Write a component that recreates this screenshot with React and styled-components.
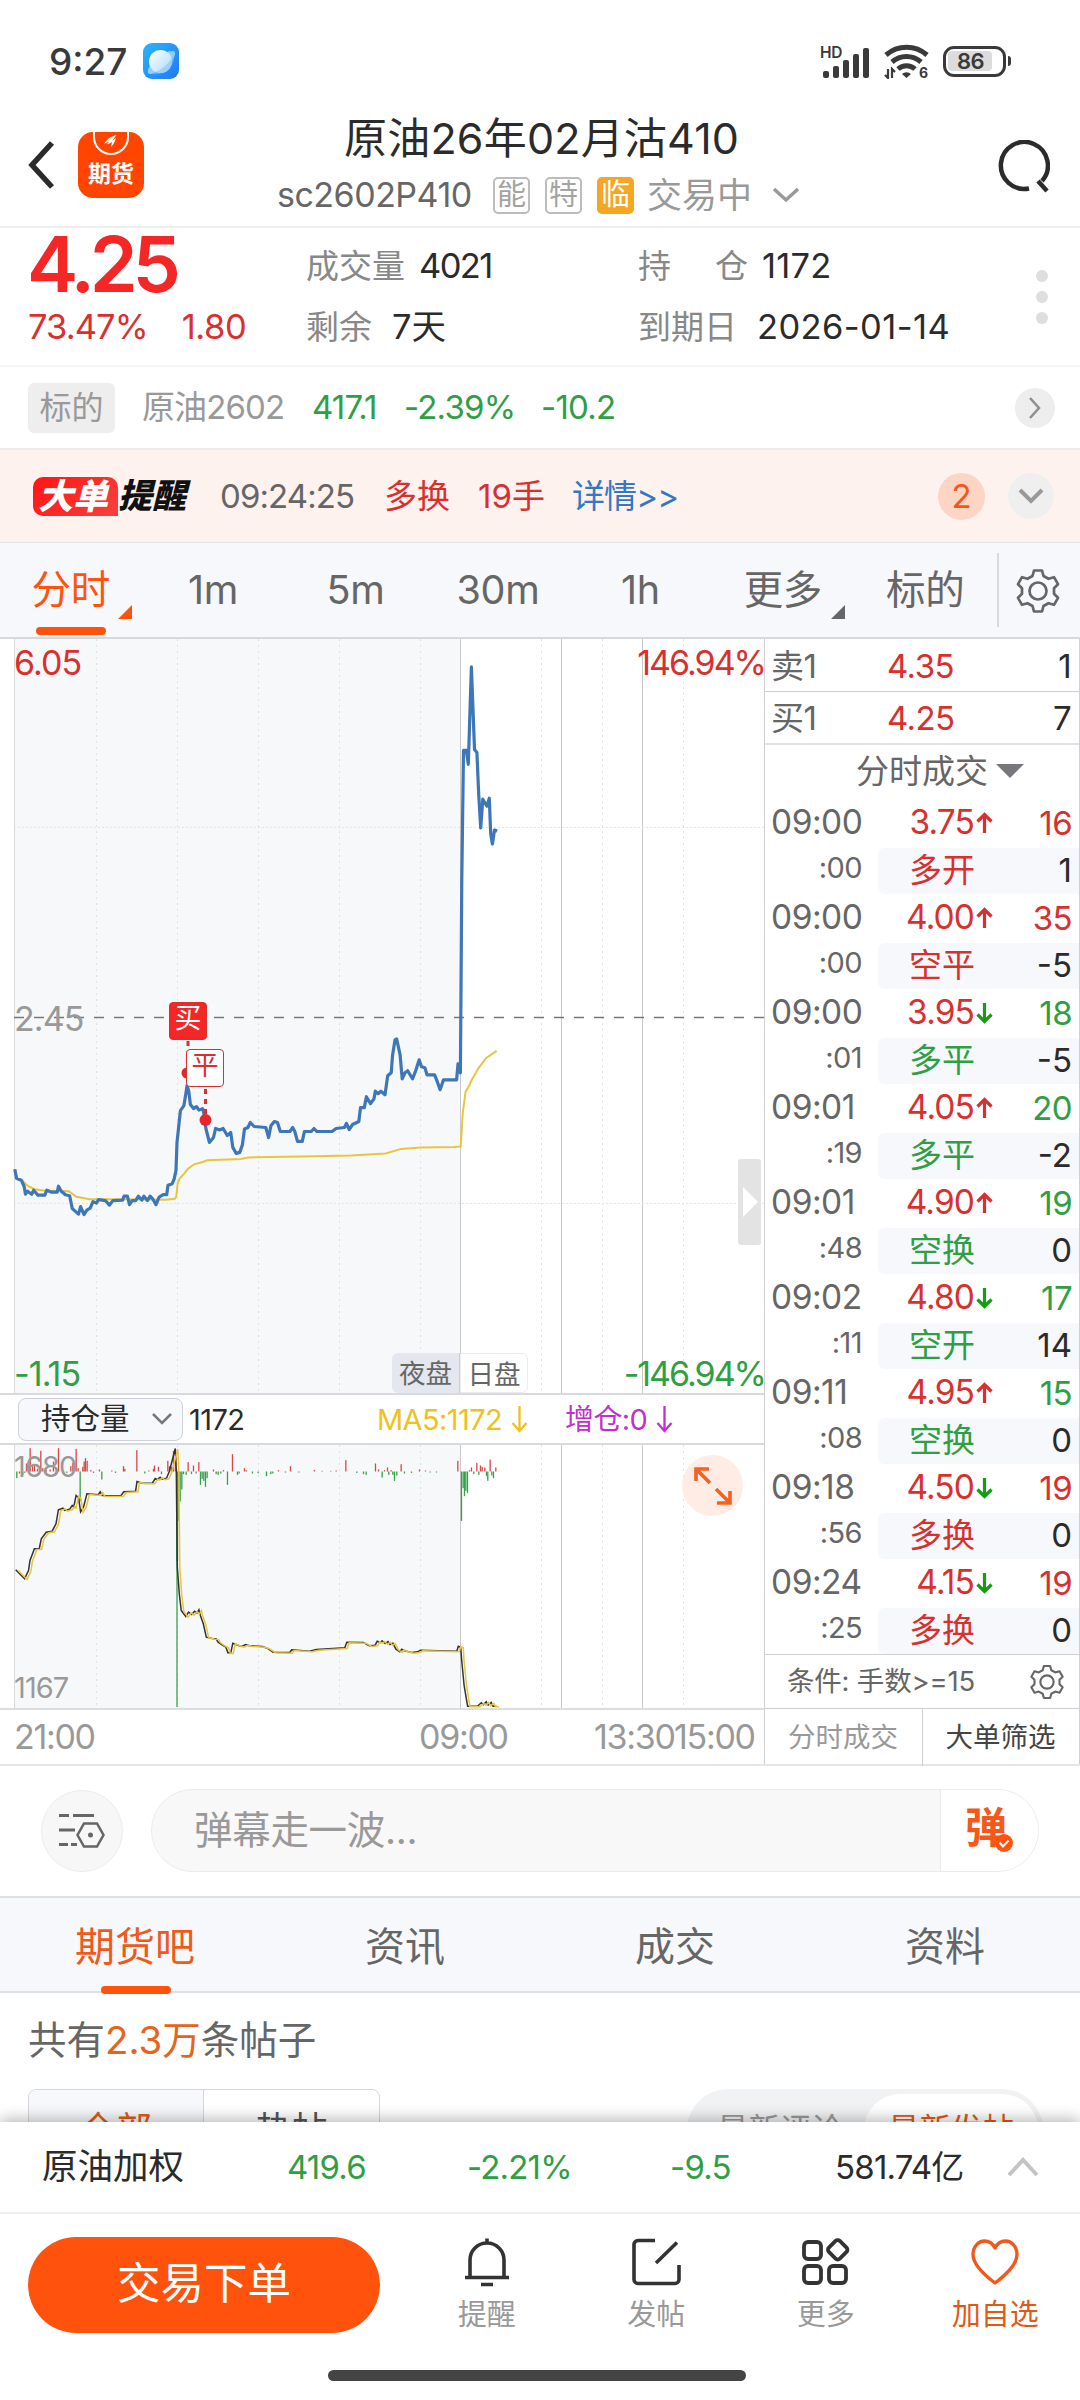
import styled, { createGlobalStyle, css } from "styled-components";

const RED = "#d8302f";
const GREEN = "#2f9e44";
const ORANGE = "#ff530d";
const DARK = "#2b2b2b";
const GREY = "#666";
const LIGHT = "#999";

const BLUE_LINE = "#3d77b8";
const YELLOW_LINE = "#e9c53c";

const periods = [
  { label: "分时", active: true, corner: true },
  { label: "1m" },
  { label: "5m" },
  { label: "30m" },
  { label: "1h" },
  { label: "更多", corner: true },
  { label: "标的" },
];

const trades = [
  { time: "09:00", sec: ":00", price: "3.75", up: true, qty: 16, kind: "多开", diff: "1", buy: true },
  { time: "09:00", sec: ":00", price: "4.00", up: true, qty: 35, kind: "空平", diff: "-5", buy: true },
  { time: "09:00", sec: ":01", price: "3.95", up: false, qty: 18, kind: "多平", diff: "-5", buy: false },
  { time: "09:01", sec: ":19", price: "4.05", up: true, qty: 20, kind: "多平", diff: "-2", buy: false },
  { time: "09:01", sec: ":48", price: "4.90", up: true, qty: 19, kind: "空换", diff: "0", buy: false },
  { time: "09:02", sec: ":11", price: "4.80", up: false, qty: 17, kind: "空开", diff: "14", buy: false },
  { time: "09:11", sec: ":08", price: "4.95", up: true, qty: 15, kind: "空换", diff: "0", buy: false },
  { time: "09:18", sec: ":56", price: "4.50", up: false, qty: 19, kind: "多换", diff: "0", buy: true },
  { time: "09:24", sec: ":25", price: "4.15", up: false, qty: 19, kind: "多换", diff: "0", buy: true },
];

// grid lines shared by both charts
const dottedX = [96.5, 177.5, 258.5, 339.5, 420.5, 541.5, 602.5, 683.5];
const solidX = [460.5, 561.5, 642.5];

const price = [
  [43,1084],[48,1102],[62,1106],[70,1118],[74,1134],[80,1128],[92,1134],[98,1126],[110,1136],[130,1136],[136,1126],[150,1130],[166,1130],[170,1118],[178,1128],[190,1135],[202,1137],[210,1163],[218,1168],[228,1174],[234,1159],[244,1175],[252,1166],[262,1162],[270,1149],[280,1152],[286,1145],[306,1147],[318,1156],[328,1147],[356,1146],[360,1138],[370,1138],[376,1155],[384,1147],[394,1147],[402,1138],[412,1146],[418,1138],[428,1147],[436,1138],[444,1144],[453,1155],[462,1140],[474,1135],[484,1135],[488,1116],[500,1113],[506,1103],[511,1086],[514,1030],[524,966],[534,956],[540,930],[543,916],[548,926],[553,954],[562,962],[570,958],[578,965],[588,962],[594,976],[598,1002],[608,1030],[620,1020],[626,1002],[638,1005],[648,1002],[660,1016],[670,1010],[676,1040],[686,1052],[696,1050],[704,1035],[710,1003],[720,1000],[727,990],[738,998],[772,1000],[780,1020],[787,996],[797,988],[806,990],[814,1008],[842,1008],[850,1000],[856,1008],[864,1028],[878,1028],[884,1008],[904,1008],[912,1002],[920,1008],[964,1008],[976,1002],[1000,1000],[1006,992],[1014,1004],[1024,994],[1042,988],[1047,960],[1058,960],[1064,938],[1076,952],[1086,942],[1090,927],[1098,932],[1106,927],[1118,934],[1126,896],[1136,890],[1140,854],[1147,824],[1152,822],[1162,854],[1168,902],[1176,890],[1184,886],[1198,902],[1208,884],[1217,864],[1224,878],[1234,880],[1240,894],[1262,894],[1270,908],[1278,924],[1288,904],[1326,904],[1330,872],[1337,890],[1341,500],[1346,242],[1354,242],[1360,270],[1369,74],[1378,240],[1385,246],[1390,330],[1396,398],[1402,340],[1414,354],[1421,338],[1425,410],[1430,430],[1436,402],[1444,404],
];
const average = [
  [43,1086],[52,1104],[64,1106],[80,1117],[100,1124],[130,1127],[200,1128],[222,1139],[260,1144],[370,1144],[480,1145],[508,1143],[512,1138],[516,1112],[522,1102],[534,1093],[546,1083],[564,1074],[586,1070],[602,1066],[700,1063],[720,1060],[880,1058],[1020,1056],[1120,1052],[1165,1043],[1220,1040],[1320,1039],[1338,1038],[1344,970],[1352,928],[1364,914],[1370,904],[1390,880],[1412,860],[1442,846],
];
const interest = [
  [32,568],[40,580],[50,595],[58,570],[61,540],[70,505],[80,504],[84,475],[94,455],[106,452],[114,430],[119,388],[128,383],[132,390],[142,386],[147,375],[150,380],[155,345],[160,352],[164,394],[170,380],[177,340],[200,343],[204,334],[208,345],[246,346],[252,334],[276,332],[279,303],[290,308],[310,308],[316,294],[320,297],[326,290],[330,296],[339,293],[345,272],[357,204],[359,270],[361,560],[365,640],[369,690],[378,708],[384,695],[390,702],[396,692],[401,698],[405,688],[408,705],[414,730],[420,770],[432,774],[440,775],[444,785],[452,793],[460,800],[464,817],[470,817],[474,788],[486,795],[492,798],[500,792],[508,796],[534,798],[544,803],[556,815],[590,816],[594,808],[630,812],[644,807],[702,802],[706,785],[740,786],[752,796],[764,794],[768,782],[774,786],[778,781],[784,789],[790,783],[794,792],[800,788],[806,806],[814,814],[818,806],[824,811],[838,816],[850,814],[856,809],[930,812],[933,797],[938,800],[940,840],[945,915],[952,977],[972,977],[980,967],[984,973],[990,964],[994,974],[1000,966],[1004,977],[1011,977],
];
// [x, height] at 3 units per pixel, positive bars go up
const flow = [
  [50,-20],[58,-6],[68,-10],[74,-4],[79,24],[90,70],[97,16],[103,20],[112,8],[122,62],[128,10],[138,4],[150,6],[160,30],[168,-6],[175,70],[190,-6],[200,-4],[212,16],[218,26],[228,68],[234,10],[240,-90],[248,14],[252,30],[256,40],[261,32],[272,4],[280,-4],[298,6],[305,-24],[335,3],[346,-4],[370,16],[374,8],[410,64],[434,-6],[446,3],[460,8],[463,18],[475,14],[484,-8],[503,32],[508,16],[514,14],[520,62],[526,54],[530,-268],[532,-268],[536,-148],[540,-90],[545,-54],[550,-8],[558,-10],[564,28],[574,-8],[580,18],[588,-6],[596,28],[601,-40],[606,-22],[611,-28],[616,-46],[621,-20],[640,6],[648,-8],[654,-10],[662,-6],[670,4],[682,-40],[697,52],[712,-10],[717,-6],[733,10],[738,4],[757,-6],[774,-5],[799,-14],[812,-8],[818,-6],[835,4],[856,-3],[871,16],[896,-3],[943,5],[966,2],[992,2],[1008,3],[1037,34],[1070,-4],[1090,-8],[1098,-10],[1126,24],[1135,6],[1146,-18],[1153,4],[1162,12],[1166,-10],[1173,4],[1178,-10],[1183,-28],[1190,-12],[1203,22],[1213,-6],[1234,-4],[1258,6],[1276,3],[1290,-3],[1309,-3],[1373,32],[1384,-148],[1389,-50],[1393,-74],[1397,-58],[1402,-64],[1408,4],[1414,12],[1421,-8],[1430,26],[1436,-10],[1441,18],[1446,14],[1454,12],[1459,-14],[1463,-28],[1470,36],[1475,-12],[1480,-20],[1487,12],
];

const project = (pts, sx, sy, dy) =>
  pts.map(([x, y]) => `${(x / sx).toFixed(1)},${(y / sy + dy).toFixed(1)}`).join(" ");

export default function App() {
  return (
    <>
      <GlobalStyle />
      <Page>
        <StatusBar />
        <Header />
        <Quote />
        <Underlying />
        <BigOrderAlert />
        <PeriodBar />
        <Market>
          <Charts />
          <OrderPanel />
        </Market>
        <Danmaku />
        <SectionTabs />
        <Posts />
        <Dock />
      </Page>
    </>
  );
}

function StatusBar() {
  return (
    <Status>
      <Clock>9:27</Clock>
      <svg width="38" height="38" viewBox="0 0 38 38">
        <defs>
          <linearGradient id="sky" x1="0" y1="0" x2="1" y2="1">
            <stop offset="0" stopColor="#28b5ff" />
            <stop offset="1" stopColor="#2277f5" />
          </linearGradient>
          <linearGradient id="orb" x1="0" y1="0" x2="1" y2="1">
            <stop offset="0" stopColor="#fff" />
            <stop offset="1" stopColor="#a9daff" />
          </linearGradient>
        </defs>
        <rect x="1" y="1" width="36" height="36" rx="9" fill="url(#sky)" />
        <path d="M6 31c-1.500-4 4-12 11-17S31 8 33 10c1 4-4 12-11 16S8 34 6 31z" fill="#8fd0ff" />
        <circle cx="18.500" cy="19.500" r="11.500" fill="url(#orb)" />
        <path d="M6 30c3 2 10 0 16-5s9-11 10-14c1 5-1 12-5 16s-13 8-21 3z" fill="#7cc3fb" opacity=".55" />
      </svg>
      <Signals>
        <svg width="52" height="36" viewBox="0 0 52 36">
          <text x="0" y="15" fontSize="15.500" fontWeight="600" fill="#3a3a3a" letterSpacing="-.4">HD</text>
          <g fill="#3a3a3a">
            <rect x="3" y="28" width="6" height="7" rx="2" />
            <rect x="13" y="23" width="6" height="12" rx="2" />
            <rect x="23" y="17" width="6" height="18" rx="2" />
            <rect x="33" y="11" width="6" height="24" rx="2" />
            <rect x="43" y="5" width="6" height="30" rx="2" />
          </g>
        </svg>
        <svg width="50" height="36" viewBox="0 0 50 36">
          <g fill="none" stroke="#3a3a3a" strokeWidth="5">
            <path d="M3 12a31 31 0 0 1 41 0" />
            <path d="M9 19a22 22 0 0 1 29 0" />
            <path d="M15 26a12.500 12.500 0 0 1 17 0" />
          </g>
          <path d="M19 31l4.500 4 4.500-4a6.500 6.500 0 0 0-9 0z" fill="#3a3a3a" />
          <path d="M5 26v9l-3-3M9 35v-9l3 3" fill="none" stroke="#3a3a3a" strokeWidth="2.200" />
          <text x="36" y="35" fontSize="14" fontWeight="700" fill="#3a3a3a">6</text>
        </svg>
        <Battery><i>86</i></Battery>
      </Signals>
    </Status>
  );
}

function Header() {
  return (
    <Head>
      <svg width="30" height="50" viewBox="0 0 30 50">
        <path d="M25 3L5 25l20 22" fill="none" stroke="#2b2b2b" strokeWidth="5.500" />
      </svg>
      <AppIcon>
        <svg width="36" height="23" viewBox="0 0 36 23">
          <path d="M1 0v5a17 17 0 0 0 34 0V0" fill="none" stroke="#fff" strokeWidth="2" />
          <path d="M11 12c3-5 7-8 13-9-2 1-3 4-5 6l4-3c-1 4-3 7-5 9l1-5c-2 1-3 2-5 2l2-2c-2 0-3 1-5 2z" fill="#fff" />
        </svg>
        期货
      </AppIcon>
      <Titles>
        <Title>原油26年02月沽410</Title>
        <SubTitle>
          <Code>sc2602P410</Code>
          <Tag>能</Tag>
          <Tag>特</Tag>
          <Tag $solid>临</Tag>
          <State>交易中</State>
          <svg width="28" height="16" viewBox="0 0 28 16">
            <path d="M2 2l12 11L26 2" fill="none" stroke="#999" strokeWidth="3.500" />
          </svg>
        </SubTitle>
      </Titles>
      <svg width="52" height="54" viewBox="0 0 52 54">
        <path d="M31 48.500A23.500 23.500 0 1 1 44 41M40 41l9 10" fill="none" stroke="#2b2b2b" strokeWidth="4.500" />
      </svg>
    </Head>
  );
}

function Quote() {
  return (
    <QuoteBox>
      <Last>
        <b>4.25</b>
        <div><Num $ls={-0.9}>73.47%</Num><Num $ls={-0.4}>1.80</Num></div>
      </Last>
      <Facts>
        <p>成交量<Num $ls={-1.6}>4021</Num></p>
        <p>剩余<Num $gap={19}>7天</Num></p>
      </Facts>
      <Facts>
        <p>持<Gap />仓<Num $ls={0.2}>1172</Num></p>
        <p>到期日<Num $gap={20} $ls={0.4}>2026-01-14</Num></p>
      </Facts>
      <Dots><i /><i /><i /></Dots>
    </QuoteBox>
  );
}

function Underlying() {
  return (
    <UnderRow>
      <GreyTag>标的</GreyTag>
      <UnderName>原油2602</UnderName>
      <UnderNum $w={92}>417.1</UnderNum>
      <UnderNum $w={137}>-2.39%</UnderNum>
      <UnderNum $w={90}>-10.2</UnderNum>
      <Round $size={40} $bg="#ededed">
        <svg width="12" height="22" viewBox="0 0 12 22">
          <path d="M1 1l9 10-9 10" fill="none" stroke="#8e8e8e" strokeWidth="2.500" />
        </svg>
      </Round>
    </UnderRow>
  );
}

function BigOrderAlert() {
  return (
    <Alert>
      <Brand><BrandRed>大单</BrandRed><BrandBlack>提醒</BrandBlack></Brand>
      <AlertText $w={164} $c={GREY} $ls={-0.9}>09:24:25</AlertText>
      <AlertText $w={94} $c={RED}>多换</AlertText>
      <AlertText $w={94} $c={RED}>19手</AlertText>
      <AlertText $w={120} $c="#3478c5" $ls={-0.9}>详情&gt;&gt;</AlertText>
      <Round $size={47} $bg="#fdd5c4">2</Round>
      <Round $size={46} $bg="#efefef">
        <svg width="26" height="16" viewBox="0 0 26 16">
          <path d="M2 2l11 11L24 2" fill="none" stroke="#999" strokeWidth="4" />
        </svg>
      </Round>
    </Alert>
  );
}

function PeriodBar() {
  return (
    <Periods>
      <PeriodList>
        {periods.map(({ label, active, corner }) => (
          <Period key={label} $active={active}>
            {label}
            {corner && <Corner $active={active} />}
          </Period>
        ))}
      </PeriodList>
      <PeriodGear><Gear size={46} /></PeriodGear>
    </Periods>
  );
}

function Gear({ size }) {
  return (
    <svg width={size} height={size} viewBox="0 0 46 46" fill="none" stroke="#666" strokeWidth="2.700" strokeLinejoin="round">
      <path d="M19 2.500h8l1.500 5.500 5 2.800 5.500-1.600 4 7-4 4v5.600l4 4-4 7-5.500-1.600-5 2.800L27 43.500h-8L17.500 38l-5-2.800L7 36.800l-4-7 4-4v-5.600l-4-4 4-7 5.500 1.600 5-2.800z" />
      <circle cx="23" cy="23" r="8.500" />
    </svg>
  );
}

function GridLines({ height }) {
  return (
    <g>
      <rect x="14" y="0" width="446" height={height} fill="#f7f8fa" />
      <path d={`M14.500 0V${height}`} stroke="#d9dade" />
      {dottedX.map((x) => (
        <path key={x} d={`M${x} 0V${height}`} stroke="#e1e2e5" strokeDasharray="2 4" />
      ))}
      {solidX.map((x) => (
        <path key={x} d={`M${x} 0V${height}`} stroke="#c8c9cc" />
      ))}
    </g>
  );
}

function Charts() {
  return (
    <ChartColumn>
      <Plot $h={754}>
        <svg width="764" height="754">
          <GridLines height={754} />
          <path d="M14 188.500H764M14 564.500H764" stroke="#e4e5e8" strokeDasharray="2 2" />
          <path d="M14 378.500H764" stroke="#777" strokeWidth="1.500" strokeDasharray="10 10" />
          <polyline points={project(average, 2.904, 2.01, -9)} fill="none" stroke={YELLOW_LINE} strokeWidth="2" />
          <polyline points={project(price, 2.904, 2.01, -9)} fill="none" stroke={BLUE_LINE} strokeWidth="3.200" strokeLinejoin="round" />
          <path d="M188 402V436M205.500 450V478" stroke={RED} strokeWidth="3" strokeDasharray="5 5" />
          <circle cx="187" cy="434" r="5.500" fill="#e5262a" />
          <circle cx="205.500" cy="481" r="6" fill="#e5262a" />
        </svg>
        <AxisLabel $x={14} $y={7} $c={RED}>6.05</AxisLabel>
        <AxisLabel $right $y={7} $c={RED}>146.94%</AxisLabel>
        <AxisLabel $x={14} $y={363} $c={LIGHT}>2.45</AxisLabel>
        <AxisLabel $x={14} $y={718} $c={GREEN}>-1.15</AxisLabel>
        <AxisLabel $right $y={718} $c={GREEN}>-146.94%</AxisLabel>
        <Marker $x={169} $y={363} $fill>买</Marker>
        <Marker $x={186} $y={410}>平</Marker>
        <Sessions><span>夜盘</span><span>日盘</span></Sessions>
        <Handle>
          <svg width="17" height="30" viewBox="0 0 17 30"><path d="M1 0l15 15L1 30z" fill="#fff" /></svg>
        </Handle>
      </Plot>
      <IndicatorRow>
        <Picker>
          持仓量
          <svg width="22" height="14" viewBox="0 0 22 14">
            <path d="M2 2l9 9 9-9" fill="none" stroke="#777" strokeWidth="2.500" />
          </svg>
        </Picker>
        <IndicatorText $w={188} $c={DARK}>1172</IndicatorText>
        <IndicatorText $w={188} $c="#edc21c">MA5:1172<Down /></IndicatorText>
        <IndicatorText $c="#c12fce">增仓:0<Down /></IndicatorText>
      </IndicatorRow>
      <Plot $h={263}>
        <svg width="764" height="263">
          <GridLines height={263} />
          {flow.map(([x, h]) => (
            <rect
              key={x}
              x={x / 3 - 0.5}
              y={h > 0 ? 26.5 - h / 3 : 26.5}
              width="1.300"
              height={Math.abs(h) / 3}
              fill={h > 0 ? "#dc4545" : "#35a249"}
            />
          ))}
          <path d="M177 27V262" stroke="#35a249" strokeWidth="1.300" />
          <polyline points={project(interest, 2.036, 3, -64.5)} fill="none" stroke="#333" strokeWidth="1.500" />
          <polyline points={project(interest.map(([x, y]) => [x + 5, y + 2]), 2.036, 3, -64.5)} fill="none" stroke={YELLOW_LINE} strokeWidth="1.500" />
        </svg>
        <AxisLabel $x={14} $y={7} $c={LIGHT} $s={29}>1680</AxisLabel>
        <AxisLabel $x={14} $y={228} $c={LIGHT} $s={29}>1167</AxisLabel>
        <Expand>
          <svg width="38" height="38" viewBox="0 0 38 38" fill="none" stroke="#f3621f" strokeWidth="3.600">
            <path d="M2 14V2h13M2 2l14 14M36 24v12H23M36 36L22 22" />
          </svg>
        </Expand>
      </Plot>
      <TimeAxis><i>21:00</i><i>09:00</i><i>13:30</i><i>15:00</i></TimeAxis>
    </ChartColumn>
  );
}

function Down() {
  return (
    <svg width="17" height="27" viewBox="0 0 17 27" fill="none" stroke="currentColor" strokeWidth="2.300">
      <path d="M8.500 0v25M1.500 17l7 8 7-8" />
    </svg>
  );
}

function OrderPanel() {
  return (
    <Panel>
      <Level><span>卖1</span><b>4.35</b><em>1</em></Level>
      <Level $last><span>买1</span><b>4.25</b><em>7</em></Level>
      <PanelTitle>
        分时成交
        <svg width="28" height="14" viewBox="0 0 28 14"><path d="M0 0h28L14 14z" fill="#77787c" /></svg>
      </PanelTitle>
      {trades.map((t, i) => (
        <Trade key={i} $c={t.buy ? RED : GREEN}>
          <time>{t.time}</time>
          <TradePrice>
            {t.price}
            <svg width="17" height="22" viewBox="0 0 17 22" fill="none" stroke={t.up ? RED : "#149c14"} strokeWidth="3.200">
              <path d={t.up ? "M8.500 21V3M1.500 9.500l7-7 7 7" : "M8.500 1v18M1.500 12.500l7 7 7-7"} />
            </svg>
          </TradePrice>
          <TradeQty>{t.qty}</TradeQty>
          <TradeSec>{t.sec}</TradeSec>
          <TradeKind><span>{t.kind}</span><em>{t.diff}</em></TradeKind>
        </Trade>
      ))}
      <Condition>条件: 手数&gt;=15 <Gear size={36} /></Condition>
      <PanelTabs><span>分时成交</span><span>大单筛选</span></PanelTabs>
    </Panel>
  );
}

function Danmaku() {
  return (
    <DanmakuRow>
      <DanmakuSet>
        <svg width="46" height="36" viewBox="0 0 46 36" fill="none" stroke="#666" strokeWidth="3">
          <path d="M0 2.500h10M14 2.500h21M0 17h16M0 31.500h9M12 31.500h6" />
          <path d="M25 10.500h13l6.500 11.500L38 33.500H25L18.500 22z" strokeWidth="2.500" />
          <circle cx="31.500" cy="22" r="2.500" fill="#666" stroke="none" />
        </svg>
      </DanmakuSet>
      <DanmakuBox>
        <span>弹幕走一波...</span>
        <DanmakuSend>
          弹
          <svg width="18" height="18" viewBox="0 0 18 18">
            <circle cx="9" cy="9" r="9" fill={ORANGE} />
            <path d="M4.500 8.500l3.500 4 5.500-6" fill="none" stroke="#fff" strokeWidth="2" />
          </svg>
        </DanmakuSend>
      </DanmakuBox>
    </DanmakuRow>
  );
}

function SectionTabs() {
  return (
    <Sections>
      <Section $active>期货吧</Section>
      <Section>资讯</Section>
      <Section>成交</Section>
      <Section>资料</Section>
    </Sections>
  );
}

function Posts() {
  return (
    <PostsBox>
      <PostCount>共有<b>2.3万</b>条帖子</PostCount>
      <Filters>
        <Segment><span>全部</span><span>热帖</span></Segment>
        <Sorter><span>最新评论</span><b>最新发帖</b></Sorter>
      </Filters>
    </PostsBox>
  );
}

function Dock() {
  return (
    <DockBox>
      <IndexRow>
        <span>原油加权</span>
        <b>419.6</b>
        <b>-2.21%</b>
        <b>-9.5</b>
        <span>581.74亿</span>
        <svg width="32" height="20" viewBox="0 0 32 20">
          <path d="M2 18L16 3l14 15" fill="none" stroke="#c4c4c4" strokeWidth="4" />
        </svg>
      </IndexRow>
      <ActionRow>
        <TradeButton>交易下单</TradeButton>
        <Action>
          <svg width="50" height="50" viewBox="0 0 50 50" fill="none" stroke="#333" strokeWidth="3.600">
            <path d="M8 40V23a17 17 0 0 1 34 0v17M3 40.500h44M25 6V1.500M19 47.500h12" />
          </svg>
          提醒
        </Action>
        <Action>
          <svg width="50" height="50" viewBox="0 0 50 50" fill="none" stroke="#333" strokeWidth="3.600">
            <path d="M24 3.500H7a4 4 0 0 0-4 4v35a4 4 0 0 0 4 4h37a4 4 0 0 0 4-4V28M46 5.500L25 26" />
          </svg>
          发帖
        </Action>
        <Action>
          <svg width="50" height="50" viewBox="0 0 50 50" fill="none" stroke="#333" strokeWidth="3.800">
            <rect x="3" y="5" width="17" height="17" rx="4" />
            <rect x="3" y="29" width="17" height="17" rx="4" />
            <rect x="28" y="29" width="17" height="17" rx="4" />
            <rect x="29" y="5" width="15.500" height="15.500" rx="3" transform="rotate(45 36.700 12.700)" />
          </svg>
          更多
        </Action>
        <Action $hot>
          <svg width="50" height="50" viewBox="0 0 50 50" fill="none" stroke="#f0591b" strokeWidth="3.400" strokeLinejoin="round">
            <path d="M25 46C17 40 3 29 3 17.500 3 9 9 4 14.500 4 19 4 23 7 25 11c2-4 6-7 10.500-7C41 4 47 9 47 17.500 47 29 33 40 25 46z" />
          </svg>
          加自选
        </Action>
      </ActionRow>
      <HomeBar />
    </DockBox>
  );
}

const GlobalStyle = createGlobalStyle`
  * { box-sizing: border-box; }
  body {
    margin: 0;
    background: #fff;
    font-family: Inter, "Noto Sans CJK SC", sans-serif;
    font-size: 33px;
    line-height: 1;
    color: ${DARK};
  }
  p { margin: 0; }
  i, em { font-style: normal; }
  svg { display: block; flex: none; }
`;

const Page = styled.div`
  width: 1080px;
  height: 2400px;
  display: flex;
  flex-direction: column;
  overflow: hidden;
  white-space: nowrap;
  > * { flex: none; }
`;

const Status = styled.div`
  height: 120px;
  padding: 2px 0 0 49px;
  display: flex;
  align-items: center;
`;
const Clock = styled.span`
  width: 93px;
  font-size: 37px;
  font-weight: 500;
  color: #3a3a3a;
`;
const Signals = styled.div`
  margin-left: auto;
  padding-right: 74px;
  display: flex;
  align-items: center;
  svg:first-child { overflow: visible; }
  svg:nth-child(2) { margin: 0 10px 0 11px; }
`;
const Battery = styled.div`
  position: relative;
  width: 63px;
  height: 31px;
  padding: 2px;
  border: 3.500px solid #3a3a3a;
  border-radius: 11px;
  i {
    display: block;
    width: 44px;
    height: 20px;
    padding-left: 9px;
    background: #dcdcdc;
    border-radius: 4px;
    font-size: 22px;
    font-weight: 600;
    line-height: 20px;
    letter-spacing: -.5px;
    color: #3a3a3a;
  }
  &::after {
    content: "";
    position: absolute;
    right: -8px;
    top: 7px;
    width: 3px;
    height: 10px;
    border-radius: 0 3px 3px 0;
    background: #3a3a3a;
  }
`;

const Head = styled.div`
  height: 108px;
  padding: 0 30px 0 27px;
  display: flex;
  align-items: flex-start;
  border-bottom: 2px solid #efefef;
  > svg { margin-top: 20px; }
`;
const AppIcon = styled.div`
  width: 66px;
  height: 66px;
  margin: 12px 0 0 21px;
  border-radius: 15px;
  background: #ff4500;
  display: flex;
  flex-direction: column;
  align-items: center;
  gap: 8px;
  font-size: 23px;
  font-weight: 700;
  color: #fff;
`;
const Titles = styled.div`
  flex: 1;
  padding-left: 133px;
`;
const Title = styled.div`
  height: 51px;
  padding-left: 67px;
  line-height: 36px;
  font-size: 43px;
  letter-spacing: .2px;
`;
const SubTitle = styled.div`
  height: 48px;
  display: flex;
  align-items: center;
`;
const Code = styled.span`
  width: 216px;
  font-size: 34px;
  letter-spacing: -.5px;
  color: ${GREY};
`;
const Tag = styled.span`
  width: 37px;
  height: 37px;
  margin-right: 15px;
  border: 2px solid ${(p) => (p.$solid ? "#f5a623" : "#bcbcbc")};
  border-radius: 5px;
  background: ${(p) => (p.$solid ? "#f5a623" : "#fff")};
  color: ${(p) => (p.$solid ? "#fff" : "#a3a3a3")};
  font-size: 29px;
  line-height: 31px;
  text-align: center;
`;
const State = styled.span`
  width: 125px;
  margin-left: -2px;
  font-size: 35px;
  color: ${LIGHT};
`;

const QuoteBox = styled.div`
  height: 139px;
  padding: 6px 32px 0 28px;
  display: grid;
  grid-template-columns: 278px 332px 1fr 12px;
  border-bottom: 2px solid #f6f6f6;
`;
const Last = styled.div`
  color: ${RED};
  b {
    display: block;
    height: 62px;
    margin-left: -1px;
    font-size: 77px;
    line-height: 60px;
    font-weight: 600;
    letter-spacing: -5.200px;
    color: #f52626;
  }
  div {
    display: flex;
    gap: 34px;
    padding-top: 14px;
  }
`;
const Num = styled.span`
  font-size: 34.500px;
  letter-spacing: ${(p) => p.$ls || 0}px;
`;
const Facts = styled.div`
  padding-top: 2px;
  p {
    height: 60px;
    display: flex;
    align-items: center;
    color: #888;
  }
  p + p { height: 62px; }
  ${Num} { color: ${DARK}; }
  p > span:last-child { margin-left: 14px; }
  p + p > span:last-child { margin-left: 20px; }
`;
const Gap = styled.span`
  width: 44px;
`;
const Dots = styled.div`
  display: flex;
  flex-direction: column;
  gap: 9px;
  padding-top: 36px;
  i {
    width: 12px;
    height: 12px;
    border-radius: 50%;
    background: #dedede;
  }
`;

const UnderRow = styled.div`
  height: 83px;
  padding: 0 25px 0 28px;
  display: flex;
  align-items: center;
  border-bottom: 2px solid #ececec;
`;
const GreyTag = styled.span`
  width: 87px;
  height: 50px;
  margin-right: 27px;
  border-radius: 6px;
  background: #eee;
  font-size: 32px;
  line-height: 49px;
  text-align: center;
  color: ${LIGHT};
`;
const UnderName = styled.span`
  width: 170px;
  letter-spacing: -.9px;
  color: ${LIGHT};
`;
const UnderNum = styled.span`
  width: ${(p) => p.$w}px;
  letter-spacing: -.8px;
  color: ${GREEN};
`;
const Round = styled.span`
  width: ${(p) => p.$size}px;
  height: ${(p) => p.$size}px;
  margin-left: auto;
  border-radius: 50%;
  background: ${(p) => p.$bg};
  display: flex;
  align-items: center;
  justify-content: center;
  color: #f0591b;
`;

const Alert = styled.div`
  height: 93px;
  padding: 0 26px 0 33px;
  display: flex;
  align-items: center;
  background: #fdf2ee;
  border-bottom: 1px solid #e6e6e6;
  > ${Round}:last-child { margin-left: 23px; }
`;
const Brand = styled.div`
  width: 187px;
  display: flex;
  align-items: center;
  font-size: 35px;
  font-weight: 900;
  font-style: italic;
`;
const BrandRed = styled.span`
  width: 85px;
  height: 39px;
  border-radius: 10px 10px 0 10px;
  background: linear-gradient(135deg, #ff1515, #f8403e);
  padding-left: 5px;
  line-height: 38px;
  color: #fff;
`;
const BrandBlack = styled.span`
  font-size: 34px;
  color: #111;
`;
const AlertText = styled.span`
  width: ${(p) => p.$w}px;
  letter-spacing: ${(p) => p.$ls || 0}px;
  color: ${(p) => p.$c};
`;

const Periods = styled.div`
  height: 96px;
  display: flex;
  align-items: center;
  background: #f7f8fb;
  border-bottom: 2px solid #d6d8db;
`;
const PeriodList = styled.div`
  width: 997px;
  height: 100%;
  display: grid;
  grid-template-columns: repeat(7, 1fr);
`;
const Period = styled.div`
  position: relative;
  display: flex;
  align-items: center;
  justify-content: center;
  padding: 1px 1px 0 0;
  font-size: 39.500px;
  letter-spacing: -.3px;
  color: ${(p) => (p.$active ? ORANGE : GREY)};
  ${(p) =>
    p.$active &&
    css`
      &::after {
        content: "";
        position: absolute;
        left: 36px;
        bottom: 2px;
        width: 70px;
        height: 8px;
        border-radius: 4px;
        background: ${ORANGE};
      }
    `}
`;
const Corner = styled.i`
  position: absolute;
  right: 10px;
  top: 62px;
  border-left: 14px solid transparent;
  border-bottom: 14px solid ${(p) => (p.$active ? ORANGE : GREY)};
`;
const PeriodGear = styled.div`
  height: 74px;
  flex: 1;
  padding: 2px 3px 0 0;
  border-left: 2px solid #d9dadd;
  display: flex;
  align-items: center;
  justify-content: center;
`;

const Market = styled.div`
  height: 1127px;
  display: flex;
  border-bottom: 2px solid #e6e6e6;
`;
const ChartColumn = styled.div`
  width: 764px;
`;
const Plot = styled.div`
  position: relative;
  height: ${(p) => p.$h}px;
`;
const AxisLabel = styled.span`
  position: absolute;
  top: ${(p) => p.$y}px;
  ${(p) => (p.$right ? "right: -1px" : `left: ${p.$x}px`)};
  font-size: ${(p) => p.$s || 34}px;
  letter-spacing: ${(p) => (p.$right ? -2 : -0.9)}px;
  color: ${(p) => p.$c};
`;
const Marker = styled.span`
  position: absolute;
  left: ${(p) => p.$x}px;
  top: ${(p) => p.$y}px;
  width: 38px;
  height: 38px;
  border: 1.500px solid ${RED};
  border-radius: 4px;
  background: ${(p) => (p.$fill ? "#f52626" : "#fff")};
  color: ${(p) => (p.$fill ? "#fff" : RED)};
  font-size: 27px;
  line-height: 32px;
  text-align: center;
`;
const Sessions = styled.div`
  position: absolute;
  left: 392px;
  bottom: 0;
  display: flex;
  span {
    width: 68px;
    height: 40px;
    border: 1px solid #ebebee;
    border-radius: 0 6px 6px 0;
    background: #fff;
    font-size: 26.500px;
    line-height: 40px;
    text-align: center;
    color: ${GREY};
  }
  span:first-child {
    border: 0;
    border-right: 1px solid #ccc;
    border-radius: 6px 0 0 6px;
    background: #e4e7ed;
  }
`;
const Handle = styled.div`
  position: absolute;
  left: 738px;
  top: 520px;
  width: 23px;
  height: 86px;
  border-radius: 3px;
  background: #e3e3e3;
  display: flex;
  align-items: center;
  padding-left: 4px;
`;
const IndicatorRow = styled.div`
  height: 52px;
  padding-left: 18px;
  display: flex;
  align-items: center;
  border-top: 2px solid #d9dadd;
  border-bottom: 2px solid #d9dadd;
`;
const Picker = styled.div`
  width: 165px;
  height: 43px;
  margin-right: 6px;
  padding: 0 9px 0 22px;
  border: 1px solid #cdd0da;
  border-radius: 8px;
  background: #f7f8fb;
  display: flex;
  align-items: center;
  justify-content: space-between;
  font-size: 29.500px;
`;
const IndicatorText = styled.span`
  width: ${(p) => p.$w || 120}px;
  display: flex;
  align-items: center;
  gap: 9px;
  font-size: 29px;
  letter-spacing: -.6px;
  color: ${(p) => p.$c};
`;
const Expand = styled.div`
  position: absolute;
  left: 682px;
  top: 10px;
  width: 61px;
  height: 61px;
  border-radius: 50%;
  background: #ffece4;
  display: flex;
  align-items: center;
  justify-content: center;
`;
const TimeAxis = styled.div`
  height: 56px;
  padding: 0 0 1px 14px;
  border-top: 2px solid #dcdde0;
  display: grid;
  grid-template-columns: 405px 175px 80px 1fr;
  align-items: center;
  font-size: 34px;
  letter-spacing: -1.300px;
  color: ${LIGHT};
`;

const Panel = styled.div`
  width: 316px;
  border: 1.500px solid #d0d0d3;
  border-top: 0;
  border-bottom: 0;
  em { text-align: right; }
`;
const Level = styled.div`
  height: 53px;
  padding: 2px 8px 0 6px;
  display: grid;
  grid-template-columns: 116px 1fr 50px;
  align-items: center;
  border-bottom: ${(p) => (p.$last ? "2px solid #e3e3e5" : "1px solid #cfcfd1")};
  letter-spacing: -.6px;
  color: ${GREY};
  b { font-weight: 400; color: ${RED}; }
  em { color: ${DARK}; }
`;
const PanelTitle = styled.div`
  height: 54px;
  padding: 0 0 2px 91px;
  display: flex;
  align-items: center;
  gap: 8px;
  color: ${GREY};
`;
const Trade = styled.div`
  height: 95px;
  padding-left: 6px;
  display: grid;
  grid-template-columns: 107px 115px 1fr;
  grid-template-rows: 48px 47px;
  align-items: center;
  color: ${(p) => p.$c};
  time { font-size: 33.500px; letter-spacing: -.5px; color: ${GREY}; }
`;
const TradePrice = styled.div`
  display: flex;
  align-items: center;
  justify-content: flex-end;
  gap: 2px;
  font-size: 33.500px;
  letter-spacing: -.9px;
  color: ${RED};
`;
const TradeQty = styled.span`
  padding-right: 7px;
  text-align: right;
  letter-spacing: -.6px;
`;
const TradeSec = styled.span`
  width: 91px;
  padding-bottom: 6px;
  text-align: right;
  font-size: 29px;
  letter-spacing: -.6px;
  color: ${GREY};
`;
const TradeKind = styled.div`
  grid-column: 2 / 4;
  height: 46px;
  padding: 0 7px 0 31px;
  border-radius: 6px 0 0 6px;
  background: #f7f8fb;
  display: flex;
  align-items: center;
  justify-content: space-between;
  em { color: ${DARK}; }
`;
const Condition = styled.div`
  height: 55px;
  padding: 0 14px 0 22px;
  border-top: 1.500px solid #cfcfd1;
  border-bottom: 1.500px solid #cfcfd1;
  display: flex;
  align-items: center;
  justify-content: space-between;
  font-size: 27.500px;
  letter-spacing: -.2px;
  color: ${GREY};
`;
const PanelTabs = styled.div`
  height: 56px;
  display: grid;
  grid-template-columns: 1fr 1fr;
  font-size: 27.500px;
  line-height: 57px;
  text-align: center;
  color: ${LIGHT};
  span { padding-right: 1px; }
  span + span {
    border-left: 1.500px solid #cfcfd1;
    color: #444;
  }
`;

const DanmakuRow = styled.div`
  height: 130px;
  padding: 0 41px 1px;
  display: flex;
  align-items: center;
  gap: 28px;
`;
const DanmakuSet = styled.div`
  width: 82px;
  height: 82px;
  border: 1px solid #ececec;
  border-radius: 50%;
  background: #f7f7f7;
  display: flex;
  align-items: center;
  justify-content: center;
`;
const DanmakuBox = styled.div`
  flex: 1;
  height: 83px;
  border: 1.500px solid #ebebeb;
  border-radius: 42px;
  background: #f8f8f8;
  overflow: hidden;
  display: flex;
  align-items: center;
  justify-content: space-between;
  padding-left: 42px;
  font-size: 38.500px;
  color: ${LIGHT};
  > span { letter-spacing: -.3px; padding-bottom: 1px; }
`;
const DanmakuSend = styled.div`
  position: relative;
  width: 98px;
  height: 100%;
  padding-left: 24px;
  border-left: 1.500px solid #ebebeb;
  background: #fff;
  font-size: 42px;
  line-height: 76px;
  font-weight: 700;
  color: #f5581a;
  svg { position: absolute; left: 54px; top: 44px; }
`;

const Sections = styled.div`
  height: 97px;
  display: grid;
  grid-template-columns: repeat(4, 1fr);
  border-top: 2px solid #dfe0e3;
  border-bottom: 2px solid #dfe0e3;
  background: #f7f8fb;
`;
const Section = styled.div`
  position: relative;
  line-height: 97px;
  text-align: center;
  font-size: 40px;
  color: ${(p) => (p.$active ? "#f0591b" : GREY)};
  ${(p) =>
    p.$active &&
    css`
      &::after {
        content: "";
        position: absolute;
        left: 101px;
        bottom: 1px;
        width: 70px;
        height: 8px;
        border-radius: 4px;
        background: ${ORANGE};
      }
    `}
`;

const PostsBox = styled.div`
  height: 129px;
  overflow: hidden;
`;
const PostCount = styled.div`
  height: 96px;
  padding-left: 28px;
  line-height: 95px;
  font-size: 38.500px;
  color: ${GREY};
  b {
    font-weight: 400;
    color: #e56420;
  }
`;
const Filters = styled.div`
  padding: 0 37px 0 28px;
  display: flex;
  justify-content: space-between;
`;
const Segment = styled.div`
  width: 352px;
  height: 82px;
  border: 1.500px solid #d5d7da;
  border-radius: 8px;
  overflow: hidden;
  display: grid;
  grid-template-columns: 1fr 1fr;
  text-align: center;
  font-size: 36px;
  line-height: 80px;
  span:first-child {
    border-right: 1.500px solid #d5d7da;
    background: #f7f8fb;
    color: #e05a17;
  }
  span + span { color: #555; }
`;
const Sorter = styled.div`
  width: 356px;
  height: 82px;
  padding: 5px;
  border-radius: 41px;
  background: #f1f2f4;
  display: flex;
  font-size: 31.500px;
  line-height: 72px;
  text-align: center;
  color: ${LIGHT};
  span { flex: 1; padding-left: 4px; }
  b {
    width: 174px;
    border-radius: 36px;
    background: #fff;
    font-weight: 400;
    color: #e05a17;
  }
`;

const DockBox = styled.div`
  position: relative;
  height: 278px;
  background: #fff;
  box-shadow: 0 -3px 14px rgba(0, 0, 0, .28);
`;
const IndexRow = styled.div`
  height: 92px;
  padding-left: 42px;
  display: grid;
  grid-template-columns: 245px 180px 203px 165px 172px 1fr;
  align-items: center;
  border-bottom: 2px solid #f0f0f0;
  letter-spacing: -.8px;
  span:first-child { font-size: 35.500px; letter-spacing: 0; }
  b { font-weight: 400; color: ${GREEN}; }
`;
const ActionRow = styled.div`
  height: 142px;
  padding: 0 0 1px 28px;
  display: flex;
  align-items: center;
`;
const TradeButton = styled.div`
  width: 352px;
  height: 96px;
  margin-right: 22px;
  border-radius: 48px;
  background: ${ORANGE};
  text-align: center;
  font-size: 43.500px;
  line-height: 93px;
  color: #fff;
`;
const Action = styled.div`
  flex: 1;
  display: flex;
  flex-direction: column;
  align-items: center;
  gap: 13px;
  padding-bottom: 4px;
  font-size: 29px;
  color: ${(p) => (p.$hot ? "#e05a17" : LIGHT)};
`;
const HomeBar = styled.div`
  width: 418px;
  height: 11px;
  margin: 14px 0 0 328px;
  border-radius: 6px;
  background: #444;
`;
